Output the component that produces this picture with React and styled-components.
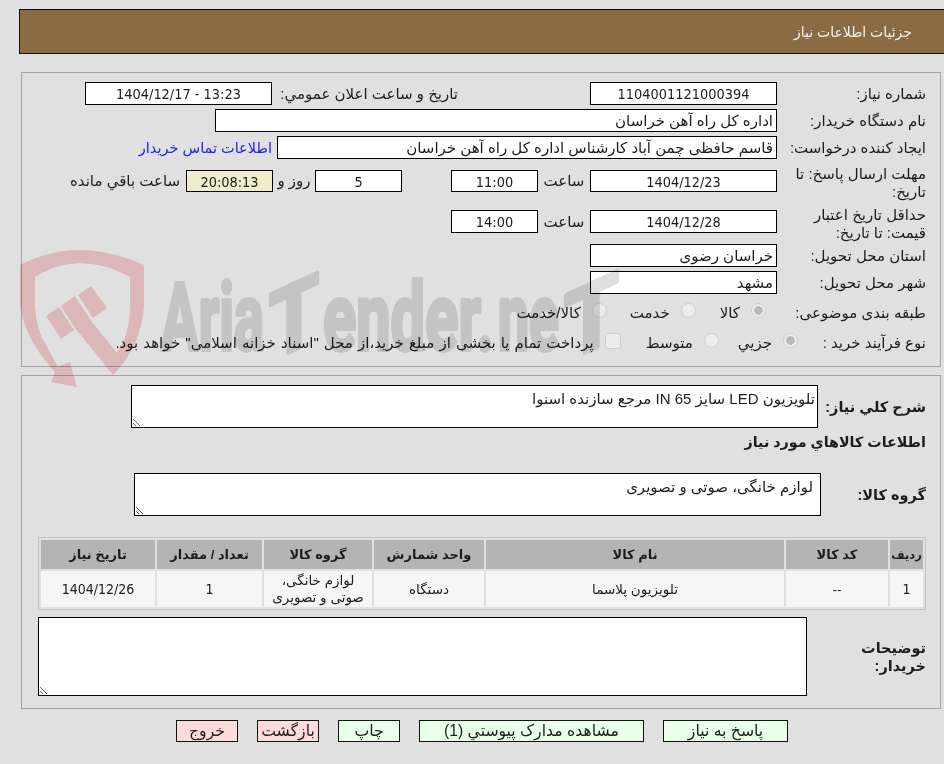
import React from 'react';
import styled, { createGlobalStyle } from 'styled-components';

const GlobalStyle = createGlobalStyle`
    html, body {
        margin: 0;
        padding: 0;
        background: #e0e0e0;
        overflow: hidden;
    }
    body {
        font-family: "Liberation Sans", "DejaVu Sans", sans-serif;
        font-size: 15px;
        color: #1c1c1c;
    }
`;

const BLOCK_COLS = [33, 102, 298, 110, 108, 105, 114];

const HEAD = ['رديف', 'کد کالا', 'نام کالا', 'واحد شمارش', 'گروه کالا', 'تعداد / مقدار', 'تاریخ نیاز'];

function Watermark() {
    return (
        <Mark viewBox="0 0 944 400" aria-hidden="true">
            <path
                fill="#fad1d1"
                d="M20 265 Q77 235 144 265 L144 305 Q142 345 113 375 L117 352 Q130 335 130 305 L130 277 Q78 249 35 277 L35 305 Q36 330 46 345 L58 367 L70 362 L77 387 L51 382 L55 372 Q25 340 20 305 Z"
            />
            <path fill="#fad1d1" d="M46 316 L59 307 L74 330 L61 339 Z" />
            <path fill="#fad1d1" d="M61 306 L75 296 L92 322 L121 358 L113 375 L75 328 Z" />
            <path fill="#fad1d1" d="M78 295 L91 286 L107 308 L93 318 Z" />
            <MarkText x="161" y="350" textLength="103" lengthAdjust="spacingAndGlyphs">Aria</MarkText>
            <MarkText transform="translate(294 350) skewY(-25)" x="-25" y="0" textLength="50" lengthAdjust="spacingAndGlyphs">T</MarkText>
            <MarkText x="323" y="350" textLength="171" lengthAdjust="spacingAndGlyphs">ender.</MarkText>
            <MarkText x="498" y="350" textLength="61" lengthAdjust="spacingAndGlyphs">ne</MarkText>
            <MarkText transform="translate(591 350) skewY(-25)" x="-27" y="0" textLength="55" lengthAdjust="spacingAndGlyphs">T</MarkText>
        </Mark>
    );
}

function App() {
    return (
        <Page dir="rtl">
            <GlobalStyle />
            <Header>جزئیات اطلاعات نیاز</Header>

            <Panel $top={18} $pb={11}>
                <Row>
                    <Label>شماره نیاز:</Label>
                    <Field $w={187} $center $num>1104001121000394</Field>
                    <Label $w={186} $mr={132}>تاریخ و ساعت اعلان عمومي:</Label>
                    <Field $w={187} $center $num>13:23 - 1404/12/17</Field>
                </Row>
                <Row $mt={4}>
                    <Label>نام دستگاه خریدار:</Label>
                    <Field $w={562}>اداره کل راه آهن خراسان</Field>
                </Row>
                <Row $mt={4}>
                    <Label>ایجاد کننده درخواست:</Label>
                    <Field $w={500}>قاسم حافظی چمن آباد کارشناس اداره کل راه آهن خراسان</Field>
                    <ContactLink href="#">اطلاعات تماس خریدار</ContactLink>
                </Row>
                <Row $mt={4} $h={36}>
                    <Label $wrap $drop>مهلت ارسال پاسخ: تا تاریخ:</Label>
                    <Field $w={187} $center $num $h={22}>1404/12/23</Field>
                    <Unit $w={52}>ساعت</Unit>
                    <Field $w={87} $center $num $h={22}>11:00</Field>
                    <Field $w={87} $center $num $h={22} $mr={49}>5</Field>
                    <Unit $w={42}>روز و</Unit>
                    <Field $w={87} $center $num $h={22} $bg="#eeeecc">20:08:13</Field>
                    <Unit $w={122}>ساعت باقي مانده</Unit>
                </Row>
                <Row $mt={5} $h={35}>
                    <Label $wrap $drop>حداقل تاریخ اعتبار قیمت: تا تاریخ:</Label>
                    <Field $w={187} $center $num>1404/12/28</Field>
                    <Unit $w={52}>ساعت</Unit>
                    <Field $w={87} $center $num>14:00</Field>
                </Row>
                <Row $mt={5}>
                    <Label>استان محل تحویل:</Label>
                    <Field $w={187}>خراسان رضوی</Field>
                </Row>
                <Row $mt={4}>
                    <Label>شهر محل تحویل:</Label>
                    <Field $w={187}>مشهد</Field>
                </Row>
                <Row $mt={6} $h={25}>
                    <Label>طبقه بندی موضوعی:</Label>
                    <Option $mr={11}><Radio type="radio" disabled defaultChecked />کالا</Option>
                    <Option $mr={24}><Radio type="radio" disabled />خدمت</Option>
                    <Option $mr={23}><Radio type="radio" disabled />کالا/خدمت</Option>
                </Row>
                <Row $mt={5} $h={25}>
                    <Label $w={128}>نوع فرآیند خرید :</Label>
                    <Option><Radio type="radio" disabled defaultChecked />جزیي</Option>
                    <Option $mr={19}><Radio type="radio" disabled />متوسط</Option>
                    <Option $mr={25}>
                        <Check type="checkbox" disabled />
                        <LongNote>پرداخت تمام یا بخشی از مبلغ خرید،از محل "اسناد خزانه اسلامی" خواهد بود.</LongNote>
                    </Option>
                </Row>
            </Panel>

            <Panel $top={8} $pb={12}>
                <Row $h={43}>
                    <Label $w={108} $bold>شرح کلي نیاز:</Label>
                    <Memo $w={687} $pad={2} readOnly defaultValue="تلویزیون LED سایز IN 65 مرجع سازنده اسنوا" />
                </Row>
                <Heading>اطلاعات کالاهاي مورد نیاز</Heading>
                <Row $mt={21} $h={43}>
                    <Label $w={105} $bold>گروه کالا:</Label>
                    <Memo $w={687} $pad={7} readOnly defaultValue="لوازم خانگی، صوتی و تصویری" />
                </Row>
                <ItemsTable>
                    <colgroup>
                        {BLOCK_COLS.map((w, i) => <col key={i} style={{ width: w }} />)}
                    </colgroup>
                    <thead>
                        <tr>{HEAD.map((h, i) => <HeadCell key={h} $tight={i === 0}>{h}</HeadCell>)}</tr>
                    </thead>
                    <tbody>
                        <tr>
                            <Cell $num>1</Cell>
                            <Cell>--</Cell>
                            <Cell>تلویزیون پلاسما</Cell>
                            <Cell>دستگاه</Cell>
                            <Cell>لوازم خانگی، صوتی و تصویری</Cell>
                            <Cell $num>1</Cell>
                            <Cell $num>1404/12/26</Cell>
                        </tr>
                    </tbody>
                </ItemsTable>
                <Row $mt={7} $h={79}>
                    <Label $w={119} $bold $wrap>توضیحات خریدار:</Label>
                    <Memo $w={769} $pad={2} readOnly defaultValue="" />
                </Row>
            </Panel>

            <Actions>
                <ActionButton $w={125}>پاسخ به نیاز</ActionButton>
                <ActionButton $w={225}>مشاهده مدارک پیوستي (1)</ActionButton>
                <ActionButton $w={62}>چاپ</ActionButton>
                <ActionButton $w={62} $danger>بازگشت</ActionButton>
                <ActionButton $w={62} $danger>خروج</ActionButton>
            </Actions>

            <Watermark />
        </Page>
    );
}

export default App;

const NUM_FONT = '"DejaVu Sans Condensed", "DejaVu Sans", sans-serif';

const Page = styled.div`
    position: relative;
    width: 944px;
    height: 764px;
    overflow: hidden;
    padding-top: 9px;
    box-sizing: border-box;
`;

const Header = styled.div`
    box-sizing: border-box;
    width: 926px;
    height: 45px;
    margin-right: -1px;
    padding-right: 32px;
    background: #8b6b42;
    border: 1px solid #111;
    color: #f2f2f2;
    font-size: 14px;
    line-height: 45px;
`;

const Panel = styled.section`
    box-sizing: border-box;
    width: 920px;
    margin-top: ${(p) => p.$top}px;
    margin-right: 3px;
    padding: 9px 14px ${(p) => p.$pb}px 15px;
    border: 1px solid #a3a3a3;
`;

const Row = styled.div`
    display: flex;
    align-items: center;
    height: ${(p) => p.$h || 23}px;
    margin-top: ${(p) => p.$mt || 0}px;
`;

const Label = styled.div`
    flex: none;
    box-sizing: border-box;
    width: ${(p) => p.$w || 149}px;
    margin-right: ${(p) => p.$mr || 0}px;
    padding-left: 8px;
    padding-top: ${(p) => (p.$drop ? 4 : 0)}px;
    font-size: ${(p) => (p.$bold ? 14.5 : 15)}px;
    font-weight: ${(p) => (p.$bold ? 700 : 400)};
    line-height: 18px;
    white-space: ${(p) => (p.$wrap ? 'normal' : 'nowrap')};
`;

const Field = styled.div`
    flex: none;
    box-sizing: border-box;
    width: ${(p) => p.$w}px;
    height: ${(p) => p.$h || 23}px;
    margin-right: ${(p) => p.$mr || 0}px;
    padding: 0 3px;
    background: ${(p) => p.$bg || '#fff'};
    border: 1px solid #000;
    font-family: ${(p) => (p.$num ? NUM_FONT : 'inherit')};
    font-size: ${(p) => (p.$num ? 14.4 : 15)}px;
    line-height: ${(p) => (p.$h ? p.$h : 22)}px;
    text-align: ${(p) => (p.$center ? 'center' : 'right')};
    white-space: nowrap;
    overflow: hidden;
`;

const Unit = styled.div`
    flex: none;
    width: ${(p) => p.$w}px;
    text-align: center;
    white-space: nowrap;
`;

const ContactLink = styled.a`
    margin-right: 5px;
    color: #2020f0;
    font-size: 14.5px;
    text-decoration: none;
    white-space: nowrap;
`;

const Option = styled.label`
    display: flex;
    align-items: center;
    gap: 11px;
    margin-right: ${(p) => p.$mr || 0}px;
    white-space: nowrap;
`;

const LongNote = styled.span`
    word-spacing: 0.9px;
`;

const Radio = styled.input`
    appearance: none;
    flex: none;
    box-sizing: border-box;
    width: 15px;
    height: 15px;
    margin: -4px 0 0;
    background: #ececec;
    border: 1.5px solid #cdcdcd;
    border-radius: 50%;

    &:checked {
        background: radial-gradient(circle, #b9b9b9 0 4px, #ececec 4.6px);
    }
`;

const Check = styled.input`
    appearance: none;
    flex: none;
    box-sizing: border-box;
    width: 16px;
    height: 16px;
    margin: -4px 0 0;
    background: #ececec;
    border: 1.5px solid #cdcdcd;
    border-radius: 3px;
`;

const Memo = styled.textarea`
    flex: none;
    box-sizing: border-box;
    display: block;
    width: ${(p) => p.$w}px;
    height: 100%;
    margin: 0;
    padding: 4px ${(p) => p.$pad}px 2px;
    background: #fff;
    border: 1px solid #000;
    border-radius: 0;
    outline: none;
    font: inherit;
    color: inherit;
`;

const Heading = styled.div`
    margin-top: 5px;
    font-size: 14.3px;
    font-weight: 700;
    line-height: 19px;
`;

const ItemsTable = styled.table`
    width: 888px;
    margin-top: 21px;
    table-layout: fixed;
    border: 1px solid #c4c4c4;
    border-spacing: 2px;
    font-size: 13.5px;
    text-align: center;
`;

const HeadCell = styled.th`
    height: 29px;
    padding: 0;
    background: #b4b4b4;
    font-size: ${(p) => (p.$tight ? 11.5 : 13)}px;
    font-weight: 700;
    white-space: nowrap;
`;

const Cell = styled.td`
    height: 36px;
    padding: 0 4px;
    background: #f6f6f6;
    font-family: ${(p) => (p.$num ? NUM_FONT : 'inherit')};
    font-size: ${(p) => (p.$num ? 14 : 13.5)}px;
    line-height: 17px;
`;

const Actions = styled.div`
    display: flex;
    gap: 19px;
    margin-top: 11px;
    margin-right: 156px;
`;

const ActionButton = styled.button`
    box-sizing: border-box;
    width: ${(p) => p.$w}px;
    height: 22px;
    padding: 0;
    background: ${(p) => (p.$danger ? '#ffdcdc' : '#eaffea')};
    border: 1px solid #111;
    font-family: inherit;
    font-size: 15.7px;
    color: inherit;
    line-height: 20px;
    white-space: nowrap;
`;

const Mark = styled.svg`
    position: absolute;
    top: 0;
    left: 0;
    width: 944px;
    height: 400px;
    mix-blend-mode: multiply;
    pointer-events: none;
`;

const MarkText = styled.text`
    font-family: Roboto, sans-serif;
    font-size: 94px;
    font-weight: 700;
    fill: #dfdfdf;
    stroke: #dfdfdf;
    stroke-width: 4px;
    stroke-linejoin: round;
    direction: ltr;
`;
